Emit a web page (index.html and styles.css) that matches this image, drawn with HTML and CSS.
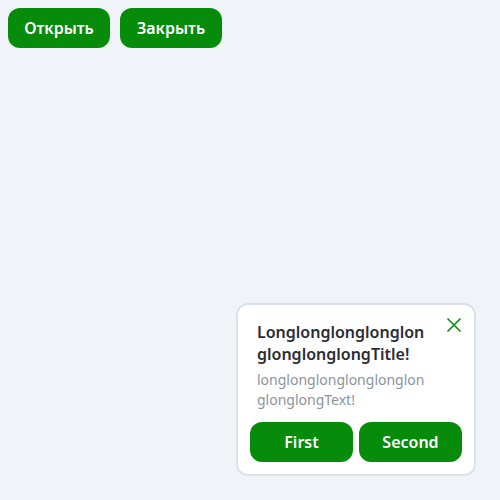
FILE: index.html
```html
<!DOCTYPE html>
<html>
<head>
<meta charset="utf-8">
<link rel="stylesheet" href="styles.css">
</head>
<body>
<div class="toolbar">
  <button class="btn">Открыть</button>
  <button class="btn">Закрыть</button>
</div>
<div class="notice">
  <button class="close" aria-label="close">
    <svg width="16" height="16" viewBox="0 0 16 16"><path d="M1.5 1.5 L14.5 14.5 M14.5 1.5 L1.5 14.5" stroke="#0b8c0b" stroke-width="1.6" fill="none"/></svg>
  </button>
  <div class="body">
    <div class="title">LonglonglonglonglonglonglonglongTitle!</div>
    <div class="text">longlonglonglonglonglonglonglongText!</div>
  </div>
  <div class="actions">
    <button class="btn wide">First</button>
    <button class="btn wide">Second</button>
  </div>
</div>
</body>
</html>
```
FILE: styles.css
```css
html, body { margin: 0; padding: 0; }
body {
  background: #f0f4f8;
  font-family: "Noto Sans", sans-serif;
  width: 500px;
  height: 500px;
  overflow: hidden;
}
.toolbar {
  display: flex;
  gap: 10px;
  padding: 8px;
}
.btn {
  background: #078b0b;
  color: #fff;
  border: none;
  border-radius: 12px;
  height: 40px;
  padding: 0 16px;
  font-family: "Noto Sans", sans-serif;
  font-weight: 600;
  font-size: 16px;
  cursor: pointer;
}
.toolbar .btn { width: 102px; padding: 0; }
.notice {
  position: fixed;
  right: 24px;
  bottom: 24px;
  width: 240px;
  box-sizing: border-box;
  background: #fff;
  border: 2px solid #d9e2ea;
  border-radius: 12px;
  padding: 0 12px 12px;
}
.close {
  position: absolute;
  top: 12px;
  right: 12px;
  width: 16px;
  height: 16px;
  padding: 0;
  border: none;
  background: none;
}
.close svg { display: block; }
.body {
  padding: 16px 30px 0 7px;
}
.title {
  font-size: 16px;
  font-weight: 600;
  line-height: 22px;
  color: #2b2d33;
  word-break: break-all;
}
.text {
  margin-top: 5px;
  font-size: 14px;
  line-height: 20px;
  color: #8c949c;
  word-break: break-all;
}
.actions {
  display: flex;
  gap: 6px;
  margin-top: 12px;
}
.btn.wide { flex: 1; padding: 0; }
```
